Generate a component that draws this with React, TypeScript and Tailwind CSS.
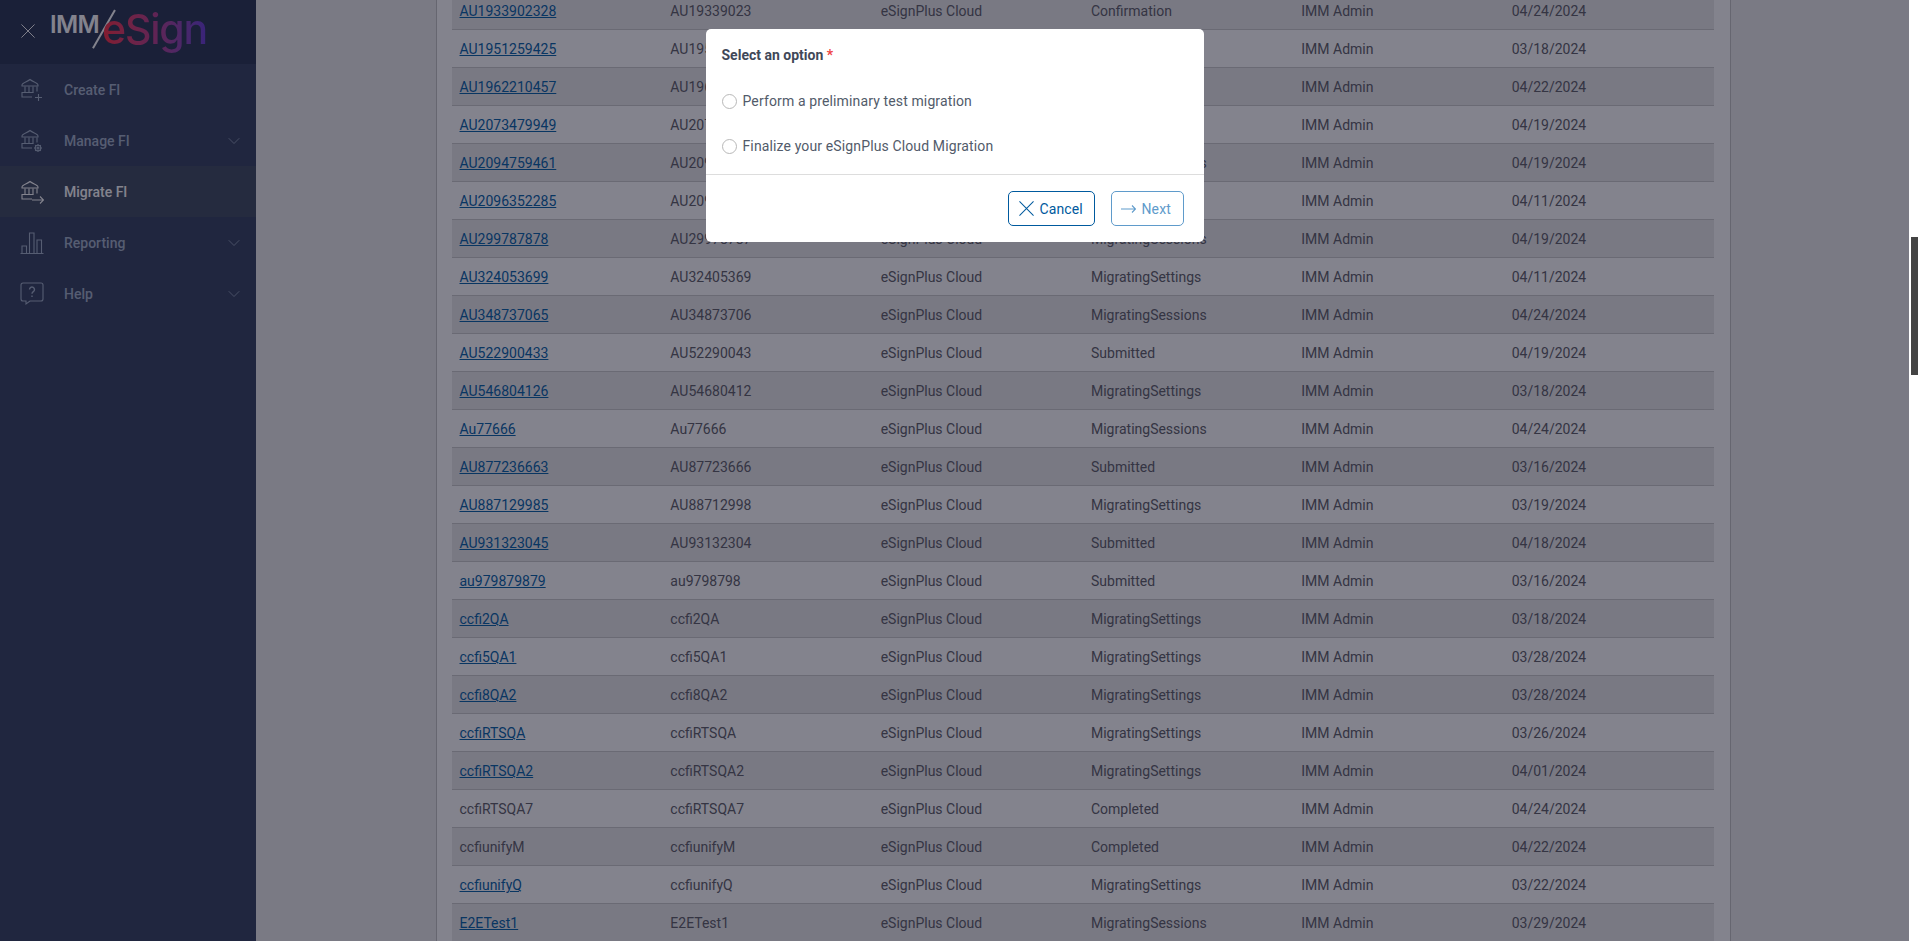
import React from 'react';
import { ChevronDown } from 'lucide-react';

type Row = { fi: string; id: string; status: string; date: string; link?: boolean };

const ROWS: Row[] = [
  { fi: 'AU1933902328', id: 'AU19339023', status: 'Confirmation', date: '04/24/2024' },
  { fi: 'AU1951259425', id: 'AU19512594', status: 'Submitted', date: '03/18/2024' },
  { fi: 'AU1962210457', id: 'AU19622104', status: 'Submitted', date: '04/22/2024' },
  { fi: 'AU2073479949', id: 'AU20734799', status: 'Submitted', date: '04/19/2024' },
  { fi: 'AU2094759461', id: 'AU20947594', status: 'MigratingSessions', date: '04/19/2024' },
  { fi: 'AU2096352285', id: 'AU20963522', status: 'Submitted', date: '04/11/2024' },
  { fi: 'AU299787878', id: 'AU29978787', status: 'MigratingSessions', date: '04/19/2024' },
  { fi: 'AU324053699', id: 'AU32405369', status: 'MigratingSettings', date: '04/11/2024' },
  { fi: 'AU348737065', id: 'AU34873706', status: 'MigratingSessions', date: '04/24/2024' },
  { fi: 'AU522900433', id: 'AU52290043', status: 'Submitted', date: '04/19/2024' },
  { fi: 'AU546804126', id: 'AU54680412', status: 'MigratingSettings', date: '03/18/2024' },
  { fi: 'Au77666', id: 'Au77666', status: 'MigratingSessions', date: '04/24/2024' },
  { fi: 'AU877236663', id: 'AU87723666', status: 'Submitted', date: '03/16/2024' },
  { fi: 'AU887129985', id: 'AU88712998', status: 'MigratingSettings', date: '03/19/2024' },
  { fi: 'AU931323045', id: 'AU93132304', status: 'Submitted', date: '04/18/2024' },
  { fi: 'au979879879', id: 'au9798798', status: 'Submitted', date: '03/16/2024' },
  { fi: 'ccfi2QA', id: 'ccfi2QA', status: 'MigratingSettings', date: '03/18/2024' },
  { fi: 'ccfi5QA1', id: 'ccfi5QA1', status: 'MigratingSettings', date: '03/28/2024' },
  { fi: 'ccfi8QA2', id: 'ccfi8QA2', status: 'MigratingSettings', date: '03/28/2024' },
  { fi: 'ccfiRTSQA', id: 'ccfiRTSQA', status: 'MigratingSettings', date: '03/26/2024' },
  { fi: 'ccfiRTSQA2', id: 'ccfiRTSQA2', status: 'MigratingSettings', date: '04/01/2024' },
  { fi: 'ccfiRTSQA7', id: 'ccfiRTSQA7', status: 'Completed', date: '04/24/2024', link: false },
  { fi: 'ccfiunifyM', id: 'ccfiunifyM', status: 'Completed', date: '04/22/2024', link: false },
  { fi: 'ccfiunifyQ', id: 'ccfiunifyQ', status: 'MigratingSettings', date: '03/22/2024' },
  { fi: 'E2ETest1', id: 'E2ETest1', status: 'MigratingSessions', date: '03/29/2024' },
];

const Bank = ({ extra }: { extra: React.ReactNode }) => (
  <svg width="24" height="26" viewBox="0 0 24 26" fill="none" stroke="currentColor" strokeWidth="1.1" className="shrink-0">
    <path d="M2 8c0-2 5-3 8-5.500 3 2.500 8 3.500 8 5.500v1H2z" />
    <path d="M5 9.500v6M9 9.500v6M13 9.500v6M17 9.500v5" />
    <path d="M13.500 15.500H2v4.500h10" />
    {extra}
  </svg>
);

const NavIcon = ({ name }: { name: string }) => {
  if (name === 'create') return <Bank extra={<path d="M15 20.500h7M18.500 17v7" />} />;
  if (name === 'manage')
    return (
      <Bank
        extra={
          <>
            <circle cx="18" cy="20" r="2.800" />
            <circle cx="18" cy="20" r="1" />
            <path d="M18 16v1.200M18 22.800V24M14 20h1.200M20.800 20H22M15.200 17.200l.8.800M20 22l.8.800M15.200 22.800l.8-.8M20 18l.8-.8" />
          </>
        }
      />
    );
  if (name === 'migrate') return <Bank extra={<path d="M12 21h11.500M20 17.500l3.500 3.500-3.500 3.500" />} />;
  if (name === 'report')
    return (
      <svg width="24" height="24" viewBox="0 0 24 24" fill="none" stroke="currentColor" strokeWidth="1.1" className="shrink-0">
        <path d="M.5 22.500h23M2 22V15h4.500v7M9.500 22V2H14v20M17 22V9h4.500v13" />
      </svg>
    );
  return (
    <svg width="24" height="24" viewBox="0 0 24 24" fill="none" stroke="currentColor" strokeWidth="1.1" className="shrink-0">
      <path d="M3 1h18a2 2 0 0 1 2 2v14a2 2 0 0 1-2 2H10l-4 3v-3H3a2 2 0 0 1-2-2V3a2 2 0 0 1 2-2z" />
      <path d="M9.500 7.500a2.500 2.500 0 1 1 3.800 2.100c-.9.600-1.300 1-1.300 2.100M12 13.500v1.500" strokeWidth="1.400" />
    </svg>
  );
};

const NAV = [
  { icon: 'create', label: 'Create FI', chevron: false, active: false },
  { icon: 'manage', label: 'Manage FI', chevron: true, active: false },
  { icon: 'migrate', label: 'Migrate FI', chevron: false, active: true },
  { icon: 'report', label: 'Reporting', chevron: true, active: false },
  { icon: 'help', label: 'Help', chevron: true, active: false },
];

const Cross = ({ size }: { size: number }) => (
  <svg width={size} height={size} viewBox="0 0 16 16" fill="none" stroke="currentColor" strokeWidth="1.100" className="shrink-0">
    <path d="M.5.500l15 15M15.500.500l-15 15" />
  </svg>
);

const Logo = () => (
  <div className="relative h-[64px] w-[220px]">
    <span className="absolute left-[50px] top-[10px] text-[24px] leading-[30px] font-semibold tracking-[-0.6px] text-white font-['Inter',sans-serif]">
      IMM
    </span>
    <span className="absolute left-[103px] top-[7px] h-[44px] w-[1.5px] rotate-[30deg] bg-white" />
    <span className="absolute left-[102px] top-[4px] text-[41px] leading-[50px] font-medium tracking-[-1.2px] font-['Inter',sans-serif] bg-gradient-to-r from-[#ff2f40] via-[#b8408c] to-[#6a3fd8] bg-clip-text text-transparent">
      eSign
    </span>
  </div>
);

export default function App() {
  return (
    <div className="flex h-[941px] overflow-hidden bg-white font-['Roboto',sans-serif] text-sm">
      <div className="relative flex flex-1 min-w-0">
        <aside className="w-[256px] shrink-0 bg-[#384462]">
          <div className="relative h-[64px] bg-[#2c3854] text-white">
            <Logo />
            <div className="absolute left-[21px] top-[24px]">
              <Cross size={14} />
            </div>
          </div>
          {NAV.map(n => (
            <div
              key={n.label}
              className={`flex h-[51px] items-center pl-[20px] pr-[12px] ${n.active ? 'bg-[#424e62] text-white' : 'text-[#a4b2c8]'}`}
            >
              <div className="w-[44px]">
                <NavIcon name={n.icon} />
              </div>
              <span className="flex-1 font-medium">{n.label}</span>
              {n.chevron && <ChevronDown size={20} strokeWidth={0.9} />}
            </div>
          ))}
        </aside>

        <main className="flex-1 min-w-0 bg-[#ececec] pl-[180px] pr-[178px]">
          <div className="h-full overflow-hidden border-x border-[#c4c4c4] bg-white pl-[15px] pr-[16px]">
            <table className="-mt-[9px] w-full table-fixed border-collapse text-[#62626a]">
              <tbody>
                {ROWS.map((r, i) => (
                  <tr key={r.fi} className={`h-[38px] border-b border-[#cccccc] ${i % 2 === 0 ? 'bg-[#ebebeb]' : ''}`}>
                    <td className="pl-[7.5px] pr-2 pt-[2px]">
                      {r.link === false ? r.fi : <a className="text-[#0a64a8] underline">{r.fi}</a>}
                    </td>
                    <td className="px-2 pt-[2px]">{r.id}</td>
                    <td className="px-2 pt-[2px]">eSignPlus Cloud</td>
                    <td className="px-2 pt-[2px]">{r.status}</td>
                    <td className="px-2 pt-[2px]">IMM Admin</td>
                    <td className="px-2 pt-[2px]">{r.date}</td>
                  </tr>
                ))}
              </tbody>
            </table>
          </div>
        </main>

        <div className="absolute inset-0 flex justify-center bg-[#08081c]/50 pt-[29px]">
          <div className="h-[213px] w-[498px] rounded-[5px] bg-white">
            <div className="h-[145px] px-4 pt-[17px]">
              <div className="font-bold leading-[18px] text-[#3f4858]">
                Select an option <span className="text-[#ef4444]">*</span>
              </div>
              <div className="mt-[24px] flex h-[26px] items-center gap-[6px] tracking-[0.13px] text-[#525b6a]">
                <span className="size-[15px] rounded-full border border-[#b8b8b8]" />
                Perform a preliminary test migration
              </div>
              <div className="mt-[19px] flex h-[26px] items-center gap-[6px] tracking-[0.13px] text-[#525b6a]">
                <span className="size-[15px] rounded-full border border-[#b8b8b8]" />
                Finalize your eSignPlus Cloud Migration
              </div>
            </div>
            <div className="flex h-[68px] justify-end gap-4 border-t border-[#dddddd] pt-4 pr-5">
              <button className="flex h-[35px] w-[87px] items-center gap-[6px] rounded-[5px] border border-[#005a9e] pl-[10px] tracking-[0.13px] text-[#005a9e]">
                <Cross size={15} />
                Cancel
              </button>
              <button className="flex h-[35px] w-[73px] items-center gap-[6px] rounded-[5px] border border-[#5f9bcb] pl-[9px] tracking-[0.13px] text-[#5f9bcb]">
                <svg width="15" height="10" viewBox="0 0 15 10" fill="none" stroke="currentColor" strokeWidth="1.100" className="shrink-0">
                  <path d="M0 5h14.500M11 1.500 14.500 5 11 8.500" />
                </svg>
                Next
              </button>
            </div>
          </div>
        </div>
      </div>

      <div className="w-[11px] shrink-0 bg-white pl-[2px] pt-[237px]">
        <div className="h-[138px] w-[7px] bg-[#444444]" />
      </div>
    </div>
  );
}
